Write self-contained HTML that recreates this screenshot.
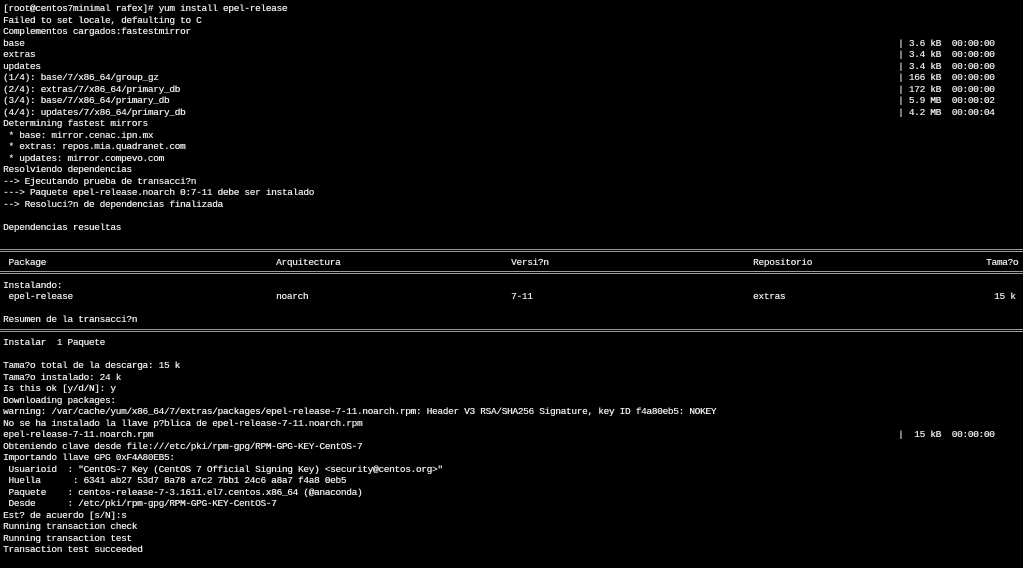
<!DOCTYPE html>
<html><head><meta charset="utf-8"><style>
html,body{margin:0;padding:0;background:#000;}
body{width:1023px;height:568px;overflow:hidden;position:relative;font-family:"Liberation Mono","DejaVu Sans Mono",monospace;font-size:9.5px;letter-spacing:-0.34px;color:#e6e6e6;text-shadow:0.3px 0 0 #e6e6e6;}
.l{position:absolute;left:3px;height:11.5px;line-height:11.5px;white-space:pre;}
.c{position:absolute;top:0;white-space:pre;}
.eq{position:absolute;left:0;width:1023px;height:1px;border-top:1px solid #9a9a9a;border-bottom:1px solid #9a9a9a;}
</style></head><body>
<div class="l" style="top:3px">[root@centos7minimal rafex]# yum install epel-release</div>
<div class="l" style="top:14.5px">Failed to set locale, defaulting to C</div>
<div class="l" style="top:26px">Complementos cargados:fastestmirror</div>
<div class="l" style="top:37.5px;width:1010px">base<span class="c" style="left:895px">| 3.6 kB  00:00:00</span></div>
<div class="l" style="top:49px;width:1010px">extras<span class="c" style="left:895px">| 3.4 kB  00:00:00</span></div>
<div class="l" style="top:60.5px;width:1010px">updates<span class="c" style="left:895px">| 3.4 kB  00:00:00</span></div>
<div class="l" style="top:72px;width:1010px">(1/4): base/7/x86_64/group_gz<span class="c" style="left:895px">| 166 kB  00:00:00</span></div>
<div class="l" style="top:83.5px;width:1010px">(2/4): extras/7/x86_64/primary_db<span class="c" style="left:895px">| 172 kB  00:00:00</span></div>
<div class="l" style="top:95px;width:1010px">(3/4): base/7/x86_64/primary_db<span class="c" style="left:895px">| 5.9 MB  00:00:02</span></div>
<div class="l" style="top:106.5px;width:1010px">(4/4): updates/7/x86_64/primary_db<span class="c" style="left:895px">| 4.2 MB  00:00:04</span></div>
<div class="l" style="top:118px">Determining fastest mirrors</div>
<div class="l" style="top:129.5px"> * base: mirror.cenac.ipn.mx</div>
<div class="l" style="top:141px"> * extras: repos.mia.quadranet.com</div>
<div class="l" style="top:152.5px"> * updates: mirror.compevo.com</div>
<div class="l" style="top:164px">Resolviendo dependencias</div>
<div class="l" style="top:175.5px">--&gt; Ejecutando prueba de transacci?n</div>
<div class="l" style="top:187px">---&gt; Paquete epel-release.noarch 0:7-11 debe ser instalado</div>
<div class="l" style="top:198.5px">--&gt; Resoluci?n de dependencias finalizada</div>
<div class="l" style="top:221.5px">Dependencias resueltas</div>
<div class="eq" style="top:249px"></div>
<div class="l" style="top:256.5px;width:1020px"> Package<span class="c" style="left:273px">Arquitectura</span><span class="c" style="left:508px">Versi?n</span><span class="c" style="left:750px">Repositorio</span><span class="c" style="left:983px">Tama?o</span></div>
<div class="eq" style="top:271px"></div>
<div class="l" style="top:279.5px">Instalando:</div>
<div class="l" style="top:291px;width:1020px"> epel-release<span class="c" style="left:273px">noarch</span><span class="c" style="left:508px">7-11</span><span class="c" style="left:750px">extras</span><span class="c" style="left:991px">15 k</span></div>
<div class="l" style="top:314px">Resumen de la transacci?n</div>
<div class="eq" style="top:329px"></div>
<div class="l" style="top:337px">Instalar  1 Paquete</div>
<div class="l" style="top:360px">Tama?o total de la descarga: 15 k</div>
<div class="l" style="top:371.5px">Tama?o instalado: 24 k</div>
<div class="l" style="top:383px">Is this ok [y/d/N]: y</div>
<div class="l" style="top:394.5px">Downloading packages:</div>
<div class="l" style="top:406px">warning: /var/cache/yum/x86_64/7/extras/packages/epel-release-7-11.noarch.rpm: Header V3 RSA/SHA256 Signature, key ID f4a80eb5: NOKEY</div>
<div class="l" style="top:417.5px">No se ha instalado la llave p?blica de epel-release-7-11.noarch.rpm</div>
<div class="l" style="top:429px;width:1010px">epel-release-7-11.noarch.rpm<span class="c" style="left:895px">|  15 kB  00:00:00</span></div>
<div class="l" style="top:440.5px">Obteniendo clave desde file:///etc/pki/rpm-gpg/RPM-GPG-KEY-CentOS-7</div>
<div class="l" style="top:452px">Importando llave GPG 0xF4A80EB5:</div>
<div class="l" style="top:463.5px"> Usuarioid  : "CentOS-7 Key (CentOS 7 Official Signing Key) &lt;security@centos.org&gt;"</div>
<div class="l" style="top:475px"> Huella      : 6341 ab27 53d7 8a78 a7c2 7bb1 24c6 a8a7 f4a8 0eb5</div>
<div class="l" style="top:486.5px"> Paquete    : centos-release-7-3.1611.el7.centos.x86_64 (@anaconda)</div>
<div class="l" style="top:498px"> Desde      : /etc/pki/rpm-gpg/RPM-GPG-KEY-CentOS-7</div>
<div class="l" style="top:509.5px">Est? de acuerdo [s/N]:s</div>
<div class="l" style="top:521px">Running transaction check</div>
<div class="l" style="top:532.5px">Running transaction test</div>
<div class="l" style="top:544px">Transaction test succeeded</div>
</body></html>
